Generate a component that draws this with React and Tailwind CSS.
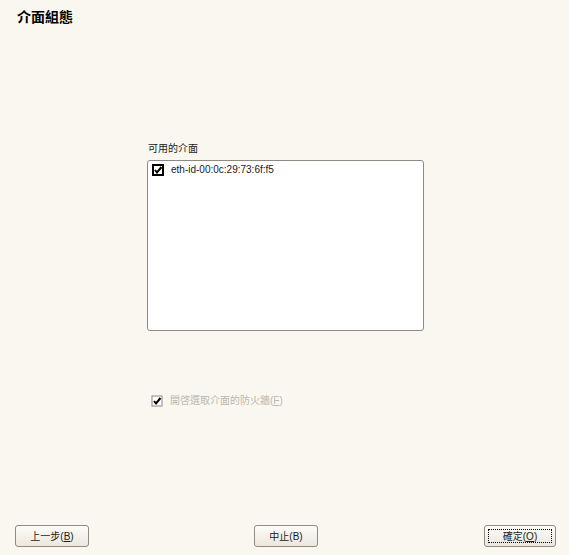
import React from 'react';

const font = { fontFamily: '"Liberation Sans", "Noto Sans CJK TC", sans-serif' };

const Check = ({ disabled }) => (
    <svg width="12" height="12" viewBox="0 0 12 12" className="shrink-0">
        <rect x="1" y="1" width="10" height="10" fill="#ffffff" stroke={disabled ? '#8a8780' : '#000000'} strokeWidth={disabled ? 1 : 2} />
        <path d="M3 6 L5 8.5 L9.5 3" fill="none" stroke="#000000" strokeWidth="2" />
    </svg>
);

const Button = ({ label, hotkey, plain, width, focused }) => (
    <button
        className="h-[22px] rounded-[3px] border border-[#8f8c84] bg-gradient-to-b from-[#fdfcf9] to-[#ebe7dd] p-[3px] text-[10px] text-[#1a1a1a]"
        style={{ width }}
    >
        <div className={`flex h-full w-full items-center justify-center ${focused ? 'border border-dotted border-black' : ''}`}>
            {label}(<span className={plain ? '' : 'underline'}>{hotkey}</span>)
        </div>
    </button>
);

export default function App() {
    return (
        <div className="flex h-[555px] w-[569px] flex-col bg-[#f9f7f0] text-[10px] text-[#1a1a1a]" style={font}>
            <h1 className="pl-[17px] pt-[7px] text-[14px] font-bold leading-[20px] text-black">介面組態</h1>

            <div className="ml-[147px] mt-[115px] w-[277px]">
                <div className="pl-[1px] leading-[14px]">可用的介面</div>
                <div className="mt-[4px] h-[171px] rounded-[3px] border border-[#8c8a83] bg-white px-[4px] pt-[3px]">
                    <div className="flex items-center gap-[7px] leading-[12px]">
                        <Check />
                        <span>eth-id-00:0c:29:73:6f:f5</span>
                    </div>
                </div>

                <div className="ml-[4px] mt-[64px] flex items-center gap-[7px] leading-[12px] text-[#bab7af]">
                    <Check disabled />
                    <span>開啓選取介面的防火牆(<span className="underline">F</span>)</span>
                </div>
            </div>

            <div className="mb-[8px] mt-auto flex items-center pl-[15px]">
                <Button label="上一步" hotkey="B" width={74} />
                <div className="ml-[165px]">
                    <Button label="中止" hotkey="B" plain width={64} />
                </div>
                <div className="ml-[166px]">
                    <Button label="確定" hotkey="O" width={72} focused />
                </div>
            </div>
        </div>
    );
}
